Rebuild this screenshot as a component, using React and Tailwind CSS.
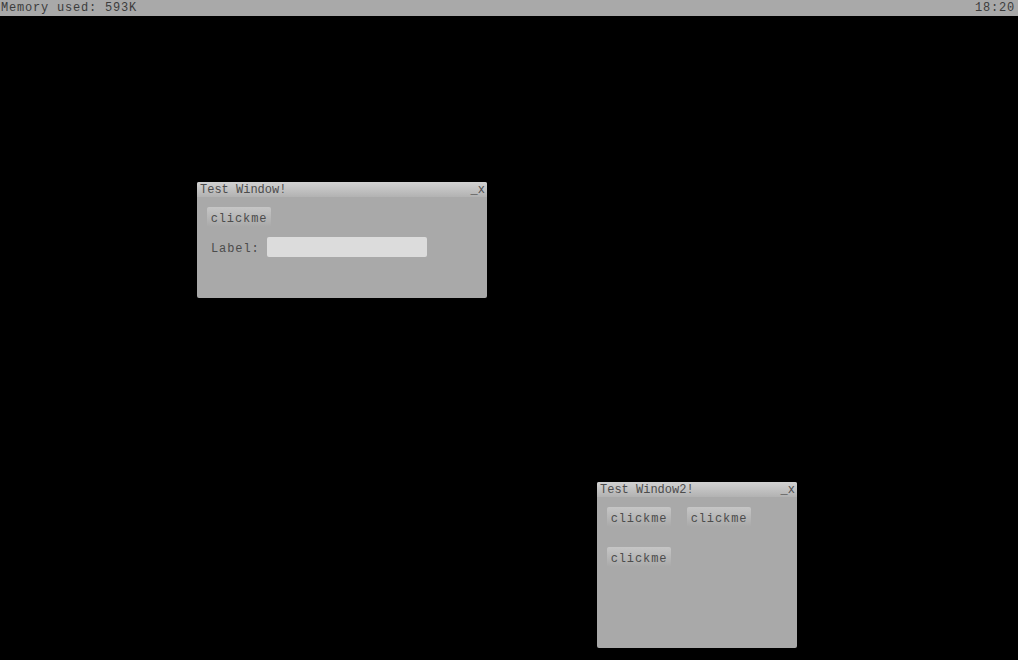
const mono = { fontFamily: '"Liberation Mono", "DejaVu Sans Mono", monospace' };

const Button = ({ children }) => (
  <button className="w-16 h-5 pt-[4px] rounded-[2px] bg-gradient-to-b from-[#c6c6c6] to-[#a9a9a9] text-[12px] leading-4 tracking-[0.9px] text-[#4c4c4c] text-center">
    {children}
  </button>
);

const Window = ({ title, className, children }) => (
  <div className={`absolute flex flex-col bg-[#a9a9a9] rounded-[2px] overflow-hidden ${className}`}>
    <div className="h-[15px] flex items-start justify-between pt-[2px] pl-[3px] pr-[2px] bg-gradient-to-b from-[#d2d2d2] to-[#b2b2b2] text-[12px] leading-[13px] text-[#4c4c4c]">
      <span>{title}</span>
      <span>_x</span>
    </div>
    <div className="flex-1 p-[10px]">{children}</div>
  </div>
);

const App = () => {
  return (
    <div className="relative w-[1018px] h-[660px] bg-black overflow-hidden" style={mono}>
      <div className="h-4 flex items-center justify-between px-[1px] bg-[#a9a9a9] text-[12px] leading-4 tracking-[0.8px] text-[#3c3c3c]">
        <span>Memory used: 593K</span>
        <span className="pr-[2px]">18:20</span>
      </div>

      <Window title="Test Window!" className="left-[197px] top-[182px] w-[290px] h-[116px]">
        <div className="flex flex-col gap-[10px]">
          <Button>clickme</Button>
          <div className="flex items-start gap-[7px]">
            <span className="pl-[4px] pt-[4px] text-[12px] leading-4 tracking-[0.9px] text-[#4c4c4c]">Label:</span>
            <div className="w-40 h-5 rounded-[2px] bg-[#dcdcdc]" />
          </div>
        </div>
      </Window>

      <Window title="Test Window2!" className="left-[597px] top-[482px] w-[200px] h-[166px]">
        <div className="flex flex-col gap-5">
          <div className="flex gap-4">
            <Button>clickme</Button>
            <Button>clickme</Button>
          </div>
          <div className="flex">
            <Button>clickme</Button>
          </div>
        </div>
      </Window>
    </div>
  );
};

export default App;
